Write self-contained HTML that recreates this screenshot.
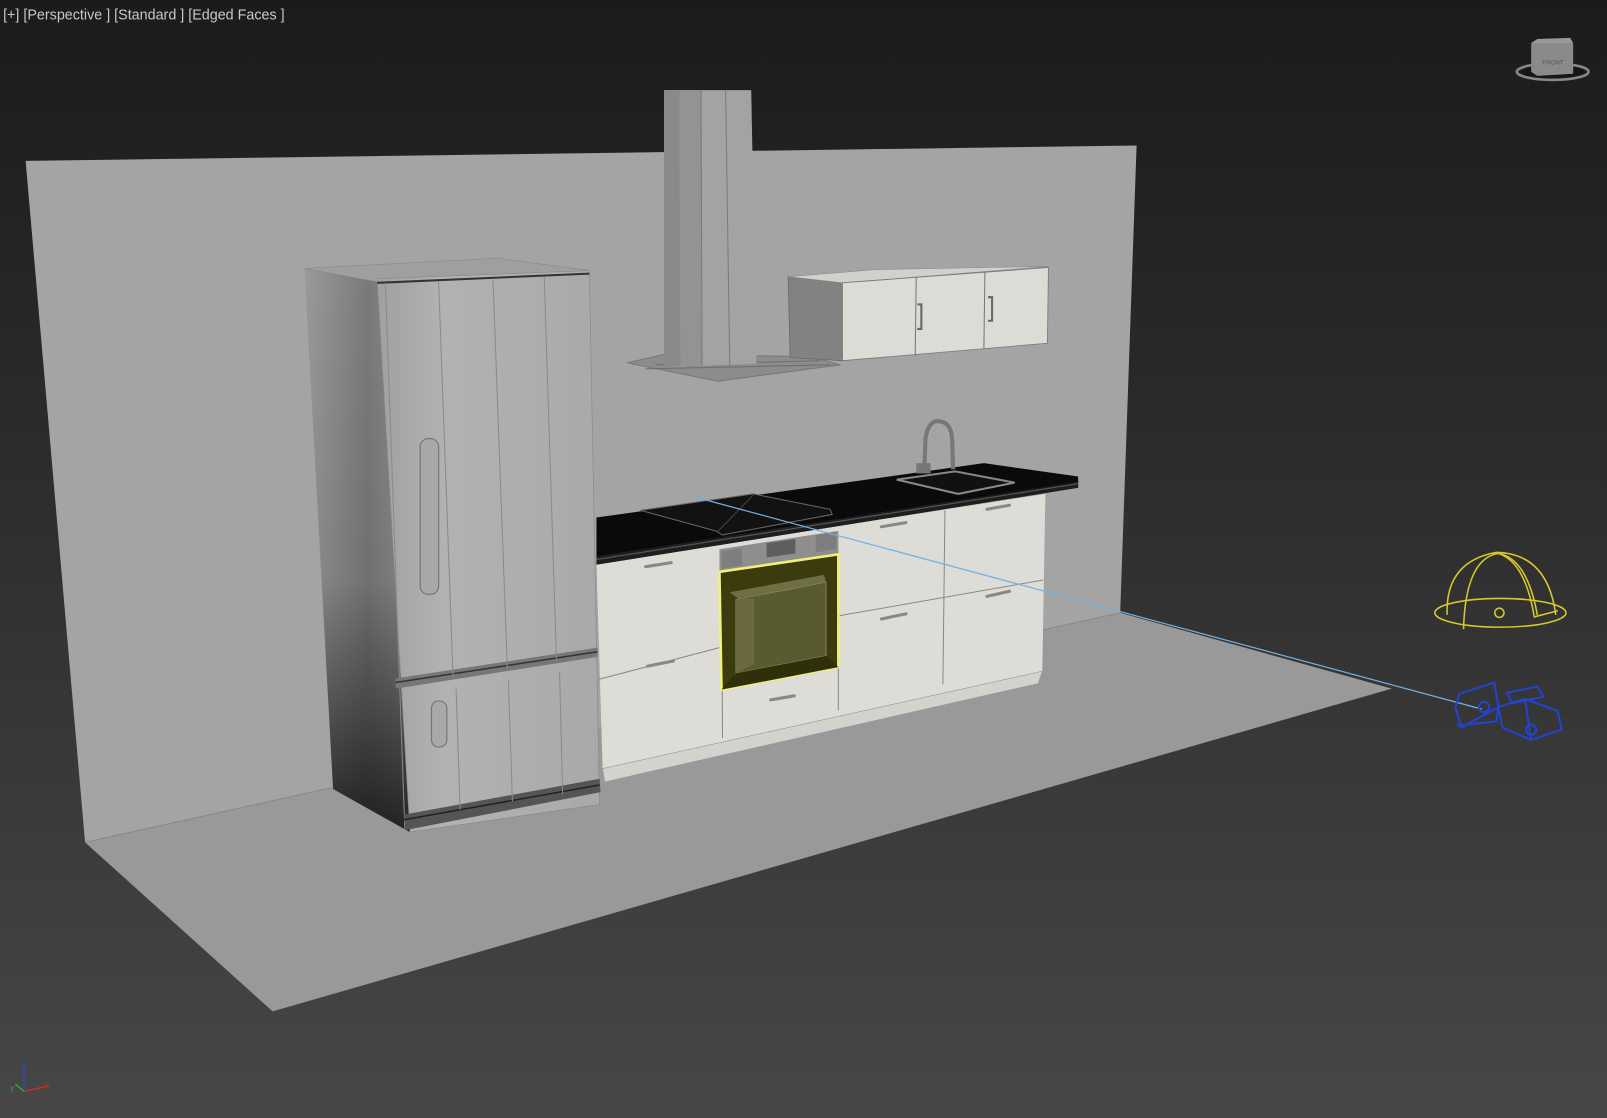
<!DOCTYPE html>
<html><head><meta charset="utf-8"><style>
html,body{margin:0;padding:0;width:1607px;height:1118px;overflow:hidden;background:#2a2a2a}
svg{display:block}
</style></head><body>
<svg width="1607" height="1118" viewBox="0 0 1568 1091" preserveAspectRatio="none" xmlns="http://www.w3.org/2000/svg">
<defs>
<linearGradient id="bg" x1="0" y1="0" x2="0" y2="1">
<stop offset="0" stop-color="#1b1b1b"/><stop offset="0.45" stop-color="#2e2e2e"/><stop offset="1" stop-color="#474747"/></linearGradient>
<linearGradient id="fside" x1="0" y1="0" x2="1" y2="0">
<stop offset="0" stop-color="#9a9a9a"/><stop offset="0.6" stop-color="#7a7a7a"/><stop offset="1" stop-color="#8e8e8e"/></linearGradient>
<linearGradient id="fside2" x1="0" y1="0" x2="0" y2="1">
<stop offset="0" stop-color="#000" stop-opacity="0"/><stop offset="0.55" stop-color="#000" stop-opacity="0.08"/><stop offset="1" stop-color="#000" stop-opacity="0.75"/></linearGradient>
<linearGradient id="ffront" x1="0" y1="0" x2="1" y2="0">
<stop offset="0" stop-color="#a0a0a0"/><stop offset="0.3" stop-color="#b2b2b2"/><stop offset="1" stop-color="#a9a9a9"/></linearGradient>
</defs>
<rect width="1568" height="1091" fill="url(#bg)"/>
<text x="3" y="19" font-family="Liberation Sans, sans-serif" font-size="14" fill="#c8c8c8">[+] [Perspective ] [Standard ] [Edged Faces ]</text>

<!-- wall & floor -->
<polygon points="25,157 1109,142 1093,598 83,822" fill="#a4a4a4"/>
<polygon points="83,822 1093,598 1358,672 266,987" fill="#999999"/>
<polyline points="83,822 1093,598" stroke="#888" stroke-width="1" fill="none"/>

<!-- hood -->
<polygon points="612,354 648,346 790,348 820,356 700,372" fill="#8c8c8c" stroke="#777" stroke-width="1"/>
<path d="M640,356 L800,352 M630,360 L810,356" stroke="#6e6e6e" stroke-width="1"/>
<polygon points="648,88 733,88 738,355 648,358" fill="#a3a3a3"/>
<polygon points="648,88 663,88 664,357 648,358" fill="#8a8a8a"/>
<polygon points="663,88 684,88 685,357 664,357" fill="#939393"/>
<line x1="708" y1="88" x2="712" y2="356" stroke="#7a7a7a"/>
<line x1="684" y1="88" x2="685" y2="357" stroke="#7a7a7a"/>

<!-- upper cabinet -->
<polygon points="769,270 822,276 822,352 771,349" fill="#828282" stroke="#6a6a6a" stroke-width="0.8"/>
<polygon points="769,270 855,263 1023,260 822,276" fill="#d2d0cb" stroke="#8a8a8a" stroke-width="0.6"/>
<polygon points="822,276 1023,261 1022,335 822,352" fill="#dddbd6" stroke="#777" stroke-width="0.8"/>
<line x1="894" y1="270" x2="893" y2="347" stroke="#777"/>
<line x1="961" y1="265" x2="960" y2="341" stroke="#777"/>
<path d="M895,297 h4 v24 h-4" stroke="#666" stroke-width="2" fill="none"/>
<path d="M964,290 h4 v23 h-4" stroke="#666" stroke-width="2" fill="none"/>

<!-- base cabinets -->
<polygon points="582,550 1020,482 1017,655 588,750" fill="#dedcd7"/>
<polygon points="588,750 1017,655 1013,667 590,763" fill="#d4d2cd" stroke="#999" stroke-width="0.6"/>
<line x1="704" y1="557" x2="705" y2="720" stroke="#888"/>
<line x1="818" y1="540" x2="818" y2="693" stroke="#888"/>
<line x1="922" y1="498" x2="920" y2="668" stroke="#888"/>
<line x1="584" y1="663" x2="702" y2="632" stroke="#888"/>
<line x1="818" y1="601" x2="1018" y2="566" stroke="#888"/>
<g stroke="#888" stroke-width="3" stroke-linecap="round">
<line x1="630" y1="553" x2="655" y2="549"/><line x1="632" y1="650" x2="657" y2="645"/>
<line x1="860" y1="514" x2="884" y2="510"/><line x1="860" y1="604" x2="884" y2="599"/>
<line x1="963" y1="497" x2="985" y2="493"/><line x1="963" y1="582" x2="985" y2="577"/>
<line x1="752" y1="683" x2="775" y2="679"/>
</g>
<!-- vent -->
<polygon points="702,536 818,518 818,541 702,558" fill="#8e8e8e"/>
<polygon points="748,530 776,526 776,540 748,544" fill="#5e5e5e"/>
<polygon points="704,538 724,535 724,552 704,555" fill="#7e7e7e"/>
<polygon points="796,522 816,519 816,536 796,539" fill="#7e7e7e"/>
<!-- oven -->
<polygon points="702,558 818,541 818,651 704,673" fill="#3b3b0e" stroke="#f3f07a" stroke-width="2.5"/>
<polygon points="718,585 806,568 806,640 718,657" fill="#5a5a30" stroke="#8e8e5a" stroke-width="0.8"/>
<polygon points="718,585 736,584 736,648 718,657" fill="#6a6a3e"/>
<polygon points="712,578 804,561 806,568 720,584" fill="#6f6f44"/>
<polygon points="718,657 806,640 818,651 704,673" fill="#2f2f0a"/>

<!-- countertop -->
<polygon points="582,505 960,452 1052,465 1052,476 582,551" fill="#0a0a0a"/>
<polygon points="582,543 1052,470 1052,476 582,551" fill="#1e1e1e"/>
<line x1="582" y1="546" x2="1052" y2="472" stroke="#555" stroke-width="1.2"/>
<polygon points="625,498 735,482 810,497 812,502 705,522 698,518" fill="#121212" stroke="#666" stroke-width="1"/>
<line x1="735" y1="483" x2="700" y2="519" stroke="#444"/>
<polygon points="875,468 932,460 990,471 935,482" fill="#111" stroke="#888" stroke-width="2"/>
<path d="M902,458 L903,428 Q906,410 916,411 Q928,412 929,428 L930,458" stroke="#777" stroke-width="4" fill="none"/>
<rect x="894" y="452" width="14" height="10" fill="#777"/>

<!-- fridge -->
<polygon points="297,262 368,275 400,812 325,770" fill="url(#fside)"/>
<polygon points="297,262 368,275 400,812 325,770" fill="url(#fside2)"/>
<polygon points="297,262 485,252 575,264 368,275" fill="#9f9f9f" stroke="#888" stroke-width="0.6"/>
<polygon points="368,272 575,264 585,785 400,812" fill="url(#ffront)" stroke="#888" stroke-width="0.6"/>
<line x1="368" y1="276" x2="575" y2="267" stroke="#333" stroke-width="2"/>
<line x1="376" y1="276" x2="395" y2="810" stroke="#8a8a8a" stroke-width="1"/>
<polygon points="386,662 583,632 583,641 386,672" fill="#777"/>
<line x1="386" y1="666" x2="583" y2="636" stroke="#333" stroke-width="1.5"/>
<polygon points="394,795 585,760 586,773 396,810" fill="#555"/>
<line x1="394" y1="800" x2="585" y2="766" stroke="#222" stroke-width="1.5"/>
<g stroke="#8a8a8a" stroke-width="1">
<line x1="428" y1="275" x2="442" y2="660"/><line x1="481" y1="272" x2="495" y2="652"/><line x1="531" y1="270" x2="543" y2="645"/>
<line x1="445" y1="672" x2="449" y2="790"/><line x1="496" y1="664" x2="500" y2="782"/><line x1="546" y1="656" x2="549" y2="775"/>
</g>
<rect x="410" y="428" width="18" height="152" rx="8" fill="#a8a8a8" stroke="#777" stroke-width="1.2"/>
<rect x="421" y="684" width="15" height="45" rx="7" fill="#a8a8a8" stroke="#777" stroke-width="1.2"/>

<!-- blue target line -->
<line x1="678" y1="485" x2="1446" y2="692" stroke="#6fb2e8" stroke-width="1.2"/>

<!-- light -->
<g stroke="#d8c92a" stroke-width="1.5" fill="none">
<ellipse cx="1464" cy="598" rx="64" ry="14"/>
<path d="M1412,600 Q1410,548 1460,539 Q1510,540 1518,600"/>
<path d="M1428,614 Q1430,545 1462,540 Q1490,545 1500,600"/>
<path d="M1462,540 Q1488,548 1497,602 L1520,596"/>
<circle cx="1463" cy="598" r="4.5"/>
</g>

<!-- camera -->
<g stroke="#2244cc" stroke-width="2" fill="none">
<polygon points="1420,690 1424,677 1458,666 1462,690 1426,710"/>
<polygon points="1423,708 1426,710 1462,690 1460,704"/>
<circle cx="1448" cy="690" r="5"/>
<polygon points="1462,690 1488,682 1520,694 1524,712 1494,722 1466,710"/>
<line x1="1488" y1="682" x2="1494" y2="722"/>
<polygon points="1470,676 1500,670 1506,680 1476,686"/>
<circle cx="1494" cy="712" r="5"/>
</g>

<!-- view cube -->
<ellipse cx="1515" cy="70" rx="35" ry="8" fill="none" stroke="#888" stroke-width="2.5"/>
<ellipse cx="1515" cy="70" rx="30" ry="6" fill="#151515"/>
<polygon points="1494,42 1530,40 1535,42 1535,72 1500,74 1494,70" fill="#8a8a8a"/>
<polygon points="1494,42 1500,38 1532,37 1535,42" fill="#9a9a9a"/>
<text x="1505" y="63" font-family="Liberation Sans,sans-serif" font-size="6" fill="#555">FRONT</text>

<!-- axis -->
<line x1="23.5" y1="1065" x2="23.5" y2="1037" stroke="#3344bb" stroke-width="1.5"/>
<text x="22" y="1043" font-family="Liberation Sans,sans-serif" font-size="9" fill="#3344bb">z</text>
<line x1="23.5" y1="1065" x2="46" y2="1060" stroke="#bb3333" stroke-width="1.5"/>
<text x="44" y="1062" font-family="Liberation Sans,sans-serif" font-size="9" fill="#bb3333">x</text>
<line x1="23.5" y1="1065" x2="15" y2="1058" stroke="#33aa33" stroke-width="1.5"/>
<text x="10" y="1064" font-family="Liberation Sans,sans-serif" font-size="8" fill="#33aa33">y</text>
</svg>
</body></html>
